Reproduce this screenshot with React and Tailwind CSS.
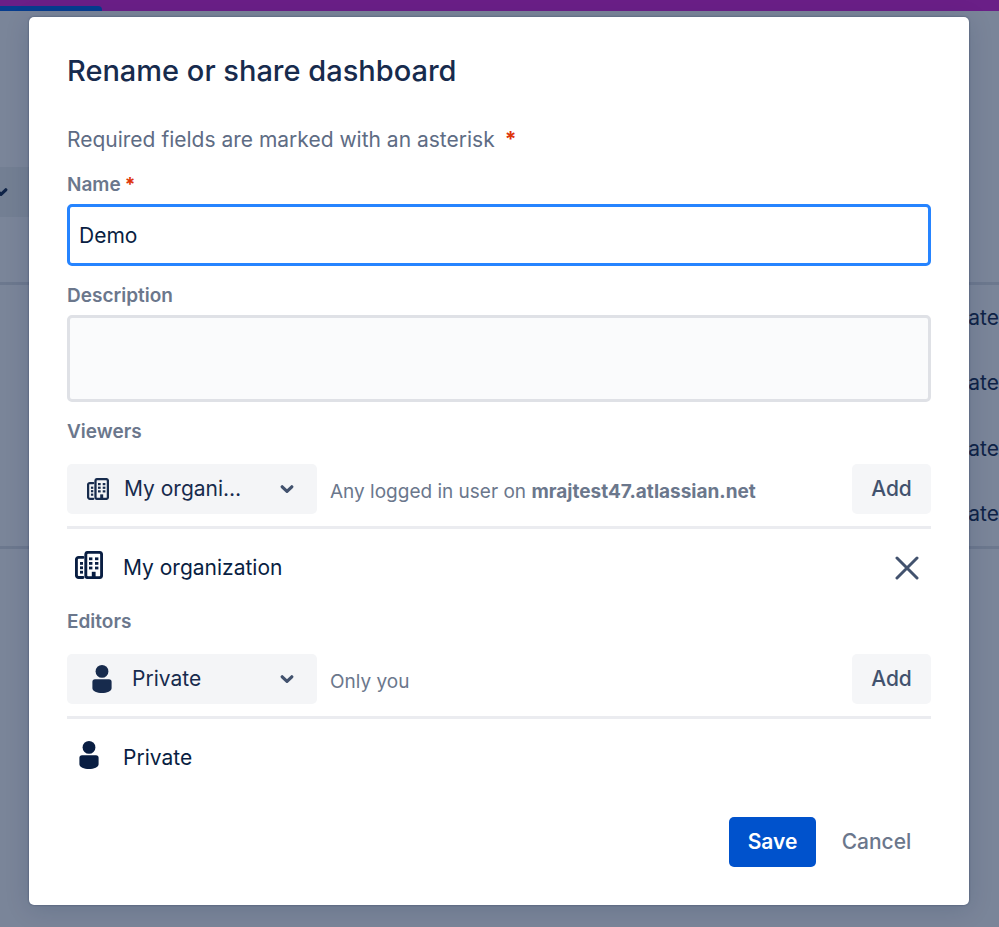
import { useState } from 'react';

const Chevron = ({ className }) => (
  <svg viewBox="0 0 14 10" className={className} fill="none" stroke="currentColor" strokeWidth="3.2" strokeLinecap="round" strokeLinejoin="round" aria-hidden="true">
    <path d="M2.2 2.8 L7 7.4 L11.8 2.8" />
  </svg>
);

const OrgIcon = ({ className }) => (
  <svg viewBox="0 0 28 28" className={className} fill="none" stroke="currentColor" strokeWidth="2.9" strokeLinejoin="round" aria-hidden="true">
    <path d="M8 6.4H3.6a2.2 2.2 0 0 0-2.200 2.200v15.700a2.200 2.200 0 0 0 2.200 2.200H8" strokeLinecap="round" />
    <rect x="10.8" y="1.4" width="15.800" height="25.200" rx="2.200" />
    <g fill="currentColor" stroke="none">
      <rect x="5" y="11" width="3" height="2.800" />
      <rect x="5" y="15.400" width="3" height="2.800" />
      <rect x="5" y="19.800" width="3" height="2.800" />
      <rect x="14" y="6.400" width="3.400" height="2.800" />
      <rect x="20" y="6.400" width="3.400" height="2.800" />
      <rect x="14" y="11" width="3.400" height="2.800" />
      <rect x="20" y="11" width="3.400" height="2.800" />
      <rect x="14" y="15.600" width="3.400" height="2.800" />
      <rect x="20" y="15.600" width="3.400" height="2.800" />
      <rect x="16.800" y="20.800" width="3.800" height="5.500" />
    </g>
  </svg>
);

const PersonIcon = ({ className }) => (
  <svg viewBox="0 0 20 28" className={className} fill="currentColor" aria-hidden="true">
    <circle cx="10" cy="6.4" r="6.4" />
    <path d="M3 14.2h14a2.6 2.6 0 0 1 2.600 2.600v6.400c0 3-4.600 4.800-9.600 4.800S.4 26.200.4 23.200v-6.400A2.600 2.600 0 0 1 3 14.200z" />
  </svg>
);

const Label = ({ htmlFor, children }) => (
  <label htmlFor={htmlFor} className="block text-[19px] leading-6 font-semibold text-[#6b778c]">{children}</label>
);

const Required = ({ className }) => <span className={`font-bold text-[#de350b] ${className}`} aria-hidden="true">*</span>;

const ShareRow = ({ id, icon, value, options, selectClass, children }) => (
  <div className="flex items-center border-b-3 border-[#ebecf0] pb-3">
    <div className="relative w-[250px] shrink-0 text-[#172b4d]">
      {icon}
      <select id={id} defaultValue={value} className={`block h-[50px] w-full appearance-none truncate rounded-[5px] bg-[#f4f5f7] text-[21px] ${selectClass}`}>
        {options.map((o) => <option key={o}>{o}</option>)}
      </select>
      <Chevron className="pointer-events-none absolute top-5 right-[23px] h-[10px] w-[14px] text-[#42526e]" />
    </div>
    <p className="ml-[13px] flex-1 pt-[5px] text-[19px] leading-6 text-[#6b778c]">{children}</p>
    <button type="button" className="h-[50px] w-[79px] rounded-[5px] bg-[#f5f6f8] text-[21px] font-medium text-[#42526e]">Add</button>
  </div>
);

const Backdrop = () => (
  <div className="min-h-screen bg-[#7a8599] text-[21px] text-[#0f2347]">
    <div className="flex h-[11px] items-end bg-[#6a1f87]">
      <div className="h-[5px] w-[102px] rounded-tr-sm bg-[#063c8e]" />
    </div>
    <div className="pt-[156px]">
      <div className="flex h-[50px] w-1/3 items-center bg-[#737f93]">
        <Chevron className="-ml-[6px] h-[10px] w-[14px]" />
      </div>
    </div>
    <table className="mt-[65px] w-full border-y-3 border-[#6c788e]">
      <tbody>
        {[1, 2, 3, 4].map((n) => (
          <tr key={n} className="h-[66px]">
            <td className="text-right">Private</td>
          </tr>
        ))}
      </tbody>
    </table>
  </div>
);

const App = () => {
  const [name, setName] = useState('Demo');
  const [description, setDescription] = useState('');

  return (
    <div className="relative min-h-screen overflow-hidden font-['Inter','Liberation_Sans',sans-serif]">
      <Backdrop />
      <div className="absolute inset-x-0 top-0 pt-[17px] pr-[30px] pb-[22px] pl-[29px]">
        <form role="dialog" aria-labelledby="dialog-title" onSubmit={(e) => e.preventDefault()}
          className="rounded-[5px] bg-white px-[38px] pt-[33px] pb-[38px] text-[21px] text-[#091e42] shadow-[0_0_2px_rgba(9,30,66,0.5),0_4px_24px_rgba(9,30,66,0.15)]">
          <h1 id="dialog-title" className="text-[29px] leading-[42px] font-medium text-[#172b4d]">Rename or share dashboard</h1>
          <p className="mt-8 leading-8 text-[#5e6c84]">Required fields are marked with an asterisk<Required className="ml-[10px]" /></p>

          <div className="mt-[17px]">
            <Label htmlFor="name">Name<Required className="ml-1" /></Label>
            <input id="name" value={name} onChange={(e) => setName(e.target.value)}
              className="mt-[7px] block h-[62px] w-full rounded-[5px] border-3 border-[#2684ff] bg-white px-[9px] outline-none" />
          </div>

          <div className="mt-[18px]">
            <Label htmlFor="description">Description</Label>
            <textarea id="description" value={description} onChange={(e) => setDescription(e.target.value)}
              className="mt-[7px] block h-[87px] w-full resize-none rounded-[5px] border-3 border-[#dfe1e6] bg-[#fafbfc] px-[9px] outline-none" />
          </div>

          <div className="mt-[18px]">
            <Label htmlFor="viewers">Viewers</Label>
            <div className="mt-5">
              <ShareRow id="viewers" value="My organization" options={['My organization', 'Private']} selectClass="pl-[57px] pr-[72px]"
                icon={<OrgIcon className="pointer-events-none absolute top-[14px] left-5 size-[22px]" />}>
                Any logged in user on <b className="font-bold">mrajtest47.atlassian.net</b>
              </ShareRow>
            </div>
            <div className="flex h-[77px] items-center pr-3 pl-2">
              <OrgIcon className="mr-5 mb-[6px] size-7" />
              <span className="flex-1">My organization</span>
              <button type="button" aria-label="Remove My organization" className="text-[#42526e]">
                <svg viewBox="0 0 24 24" className="size-6" fill="none" stroke="currentColor" strokeWidth="3" strokeLinecap="round" aria-hidden="true">
                  <path d="M2 2 L22 22 M22 2 L2 22" />
                </svg>
              </button>
            </div>
          </div>

          <div className="mt-1">
            <Label htmlFor="editors">Editors</Label>
            <div className="mt-5">
              <ShareRow id="editors" value="Private" options={['Private', 'My organization']} selectClass="pl-[65px] pr-[72px]"
                icon={<PersonIcon className="pointer-events-none absolute top-[11px] left-[25px] h-7 w-5" />}>
                Only you
              </ShareRow>
            </div>
            <div className="flex h-[77px] items-center pl-3">
              <PersonIcon className="mr-6 mb-[6px] h-7 w-5" />
              <span>Private</span>
            </div>
          </div>

          <div className="mt-[21px] flex justify-end">
            <button type="submit" className="h-[50px] w-[87px] rounded-[5px] bg-[#0052cc] font-semibold text-white">Save</button>
            <button type="button" className="ml-[6px] h-[50px] w-[109px] font-medium text-[#6b778c]">Cancel</button>
          </div>
        </form>
      </div>
    </div>
  );
};
export default App;
